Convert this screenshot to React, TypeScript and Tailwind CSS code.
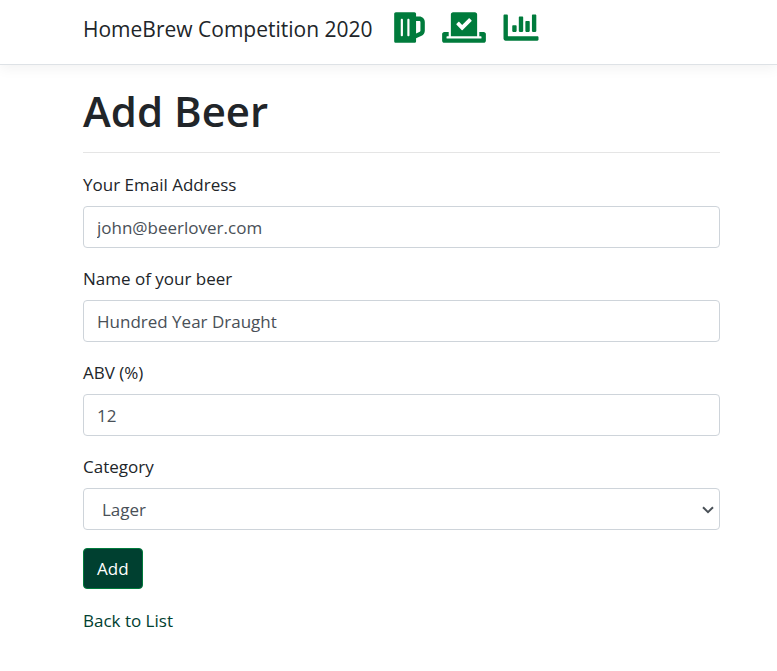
import { FaBeer, FaVoteYea, FaChartBar } from "react-icons/fa";

const labelClass = "mb-[7px] block leading-[28px]";
const fieldClass =
  "block h-[42px] w-full appearance-none rounded-[4px] border border-[#ced4da] bg-white text-[17px] text-[#495057] outline-none";

function Field({ id, label, value, type = "text" }: { id: string; label: string; value: string; type?: string }) {
  return (
    <div className="mb-[17px]">
      <label htmlFor={id} className={labelClass}>
        {label}
      </label>
      <input id={id} type={type} defaultValue={value} className={`${fieldClass} px-[13px]`} />
    </div>
  );
}

export default function App() {
  return (
    <div className="min-h-screen bg-white font-['Open_Sans','Noto_Sans',sans-serif] text-[17px] text-[#212529]">
      <header className="flex h-[65px] items-center border-b border-[#dee2e6] px-[83px] pb-2 shadow-[0_4px_12px_rgba(0,0,0,0.05)]">
        <a href="#home" className="whitespace-nowrap pt-1 text-[21px]">HomeBrew Competition 2020</a>
        <nav className="ml-[21px] flex gap-[17px] pb-px text-[#007b3c]">
          <a href="#beers" aria-label="Beers"><FaBeer className="h-[35px] w-[31px]" /></a>
          <a href="#vote" aria-label="Vote"><FaVoteYea className="h-[35px] w-[44px]" /></a>
          <a href="#results" aria-label="Results"><FaChartBar className="h-[35px] w-[36px]" /></a>
        </nav>
      </header>
      <main className="pr-[57px] pl-[83px] pt-5">
        <h1 className="text-[42px] font-semibold leading-[51px]">Add Beer</h1>
        <hr className="mt-4 mb-[18px] border-[#e5e5e5]" />
        <form>
          <Field id="email" label="Your Email Address" value="john@beerlover.com" type="email" />
          <Field id="beer" label="Name of your beer" value="Hundred Year Draught" />
          <Field id="abv" label="ABV (%)" value="12" />
          <div className="mb-[18px]">
            <label htmlFor="category" className={labelClass}>Category</label>
            <div className="relative">
              <select id="category" className={`${fieldClass} pt-px pr-8 pl-[18px]`}>
                <option>Lager</option>
              </select>
              <svg
                viewBox="0 0 12 8"
                className="pointer-events-none absolute top-[18px] right-[6px] h-2 w-3"
                fill="none"
                stroke="#495057"
                strokeWidth="2"
                aria-hidden="true"
              >
                <path d="M1 1.2 6 6.2 11 1.2" />
              </svg>
            </div>
          </div>
          <button type="submit" className="h-[41px] rounded-[4px] border border-[#007b3c] bg-[#004030] px-[13px] text-white">Add</button>
        </form>
        <a href="#list" className="mt-[18px] inline-block leading-[28px] text-[#004030]">Back to List</a>
      </main>
    </div>
  );
}
